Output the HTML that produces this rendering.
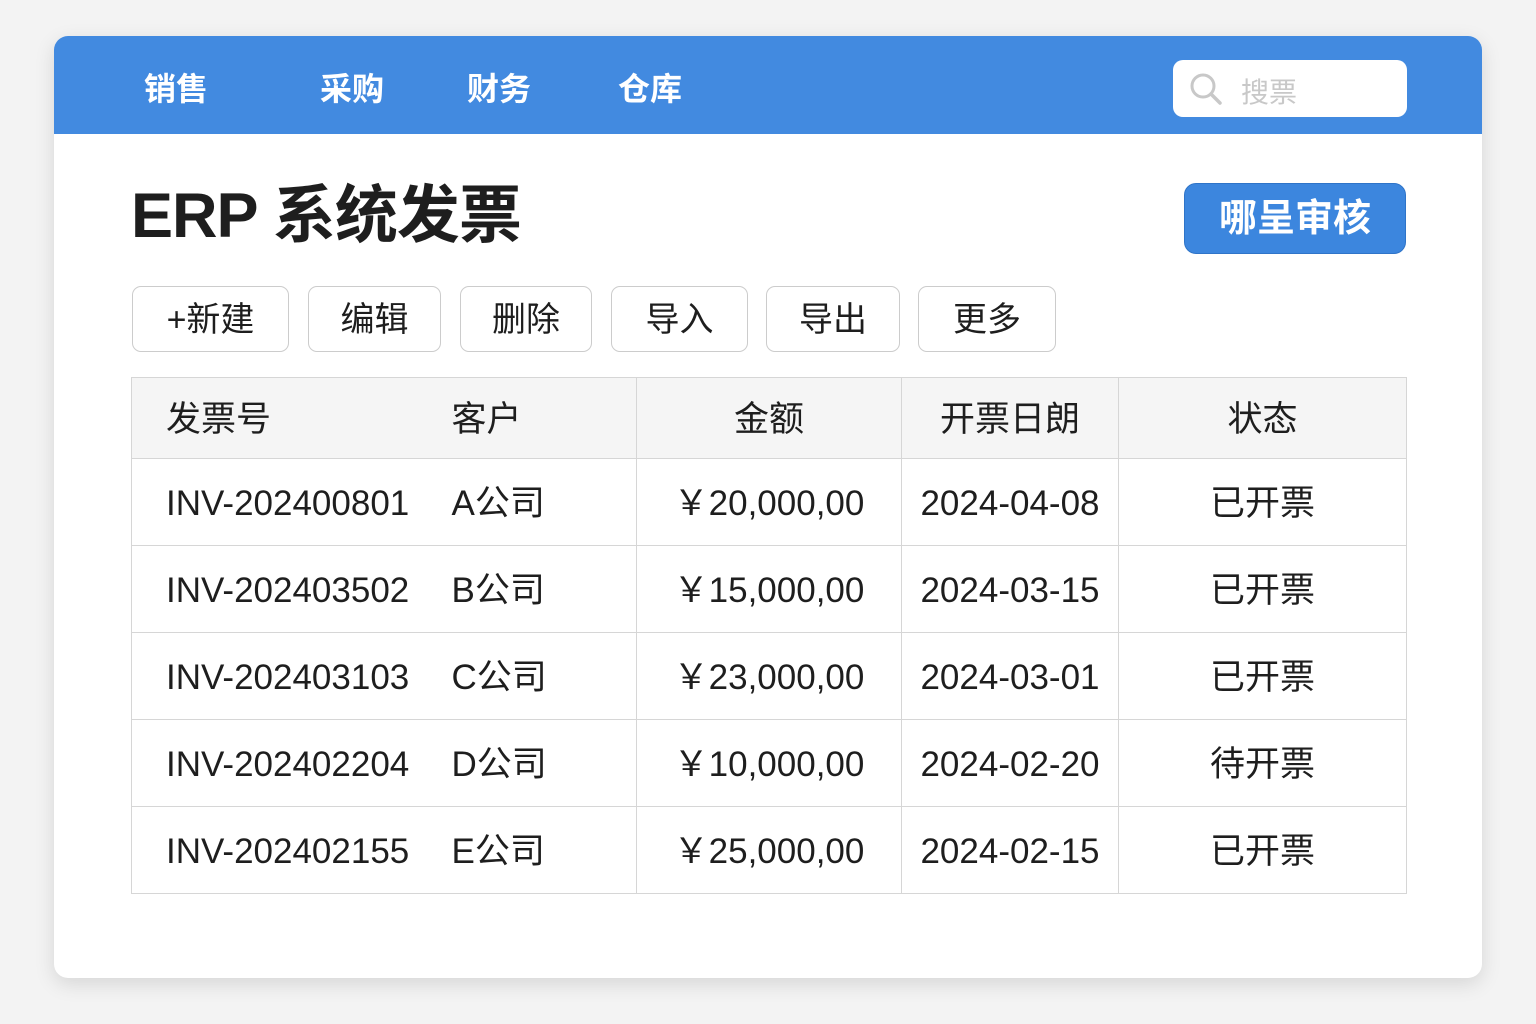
<!DOCTYPE html>
<html><head><meta charset="utf-8"><style>
*{margin:0;padding:0;box-sizing:border-box}
body{width:1536px;height:1024px;background:#f3f3f3;font-family:"Liberation Sans","Noto Sans CJK SC",sans-serif;position:relative;overflow:hidden;color:#1e1e1e}
.card{position:absolute;left:54px;top:36px;width:1428px;height:942px;background:#fff;border-radius:14px;box-shadow:0 6px 20px rgba(0,0,0,.12);overflow:hidden}
.hdr{position:absolute;left:0;top:0;width:100%;height:98px;background:#428ae0}
.nav{position:absolute;top:33px;color:#fff;font-size:32px;font-weight:bold;line-height:40px}
.search{position:absolute;left:1119px;top:24px;width:234px;height:57px;background:#fff;border-radius:10px}
.search span{position:absolute;left:68px;top:11px;font-size:28px;color:#c8c8c8}
.title{position:absolute;left:77px;top:144px;font-size:63px;font-weight:bold;line-height:72px;color:#1e1e1e;letter-spacing:-1px}
.appr{position:absolute;left:1130px;top:147px;width:222px;height:71px;background:#3c86de;border-radius:12px;color:#fff;font-size:38px;font-weight:bold;text-align:center;line-height:71px;border:1px solid #2f74c8}
.btn{position:absolute;top:250px;height:66px;border:1.5px solid #ccc;border-radius:9px;font-size:34px;line-height:66px;text-align:center;color:#1e1e1e}
table{position:absolute;left:77px;top:341px;width:1276px;border-collapse:collapse;font-size:35px}
td,th{border-top:1.5px solid #d6d6d6;border-bottom:1.5px solid #d6d6d6;height:87px;font-weight:normal;line-height:40px;vertical-align:middle;white-space:nowrap;padding-top:4px}
td span,th span{display:inline-block;line-height:40px}
th{background:#f5f5f5;height:81px}
table{border-left:1.5px solid #d6d6d6;border-right:1.5px solid #d6d6d6}
.c1{width:320px;padding-left:34px;text-align:left}
.c2{width:185px;text-align:left}
.c3{width:265px;text-align:center;border-left:1.5px solid #d6d6d6}
.c4{width:217px;text-align:center;border-left:1.5px solid #d6d6d6}
.c5{text-align:center;border-left:1.5px solid #d6d6d6}
</style></head><body>
<div class="card">
<div class="hdr">
<div class="nav" style="left:90px">销售</div>
<div class="nav" style="left:266px">采购</div>
<div class="nav" style="left:413px">财务</div>
<div class="nav" style="left:564px">仓库</div>
<div class="search"><svg style="position:absolute;left:16px;top:12px" width="34" height="34" viewBox="0 0 34 34"><circle cx="14" cy="14" r="11" fill="none" stroke="#c8c8c8" stroke-width="3"/><path d="M22 22L31 31" stroke="#c8c8c8" stroke-width="3.5" stroke-linecap="round"/></svg><span>搜票</span></div>
</div>
<div class="title">ERP 系统发票</div>
<div class="appr">哪呈审核</div>
<div class="btn" style="left:78px;width:157px">+新建</div>
<div class="btn" style="left:254px;width:133px">编辑</div>
<div class="btn" style="left:406px;width:132px">删除</div>
<div class="btn" style="left:557px;width:137px">导入</div>
<div class="btn" style="left:712px;width:134px">导出</div>
<div class="btn" style="left:864px;width:138px">更多</div>
<table>
<tr><th class="c1"><span>发票号</span></th><th class="c2"><span>客户</span></th><th class="c3"><span>金额</span></th><th class="c4"><span>开票日朗</span></th><th class="c5"><span>状态</span></th></tr>
<tr><td class="c1"><span>INV-202400801</span></td><td class="c2"><span>A公司</span></td><td class="c3"><span>￥20,000,00</span></td><td class="c4"><span>2024-04-08</span></td><td class="c5"><span>已开票</span></td></tr>
<tr><td class="c1"><span>INV-202403502</span></td><td class="c2"><span>B公司</span></td><td class="c3"><span>￥15,000,00</span></td><td class="c4"><span>2024-03-15</span></td><td class="c5"><span>已开票</span></td></tr>
<tr><td class="c1"><span>INV-202403103</span></td><td class="c2"><span>C公司</span></td><td class="c3"><span>￥23,000,00</span></td><td class="c4"><span>2024-03-01</span></td><td class="c5"><span>已开票</span></td></tr>
<tr><td class="c1"><span>INV-202402204</span></td><td class="c2"><span>D公司</span></td><td class="c3"><span>￥10,000,00</span></td><td class="c4"><span>2024-02-20</span></td><td class="c5"><span>待开票</span></td></tr>
<tr><td class="c1"><span>INV-202402155</span></td><td class="c2"><span>E公司</span></td><td class="c3"><span>￥25,000,00</span></td><td class="c4"><span>2024-02-15</span></td><td class="c5"><span>已开票</span></td></tr>
</table>
</div>
</body></html>
